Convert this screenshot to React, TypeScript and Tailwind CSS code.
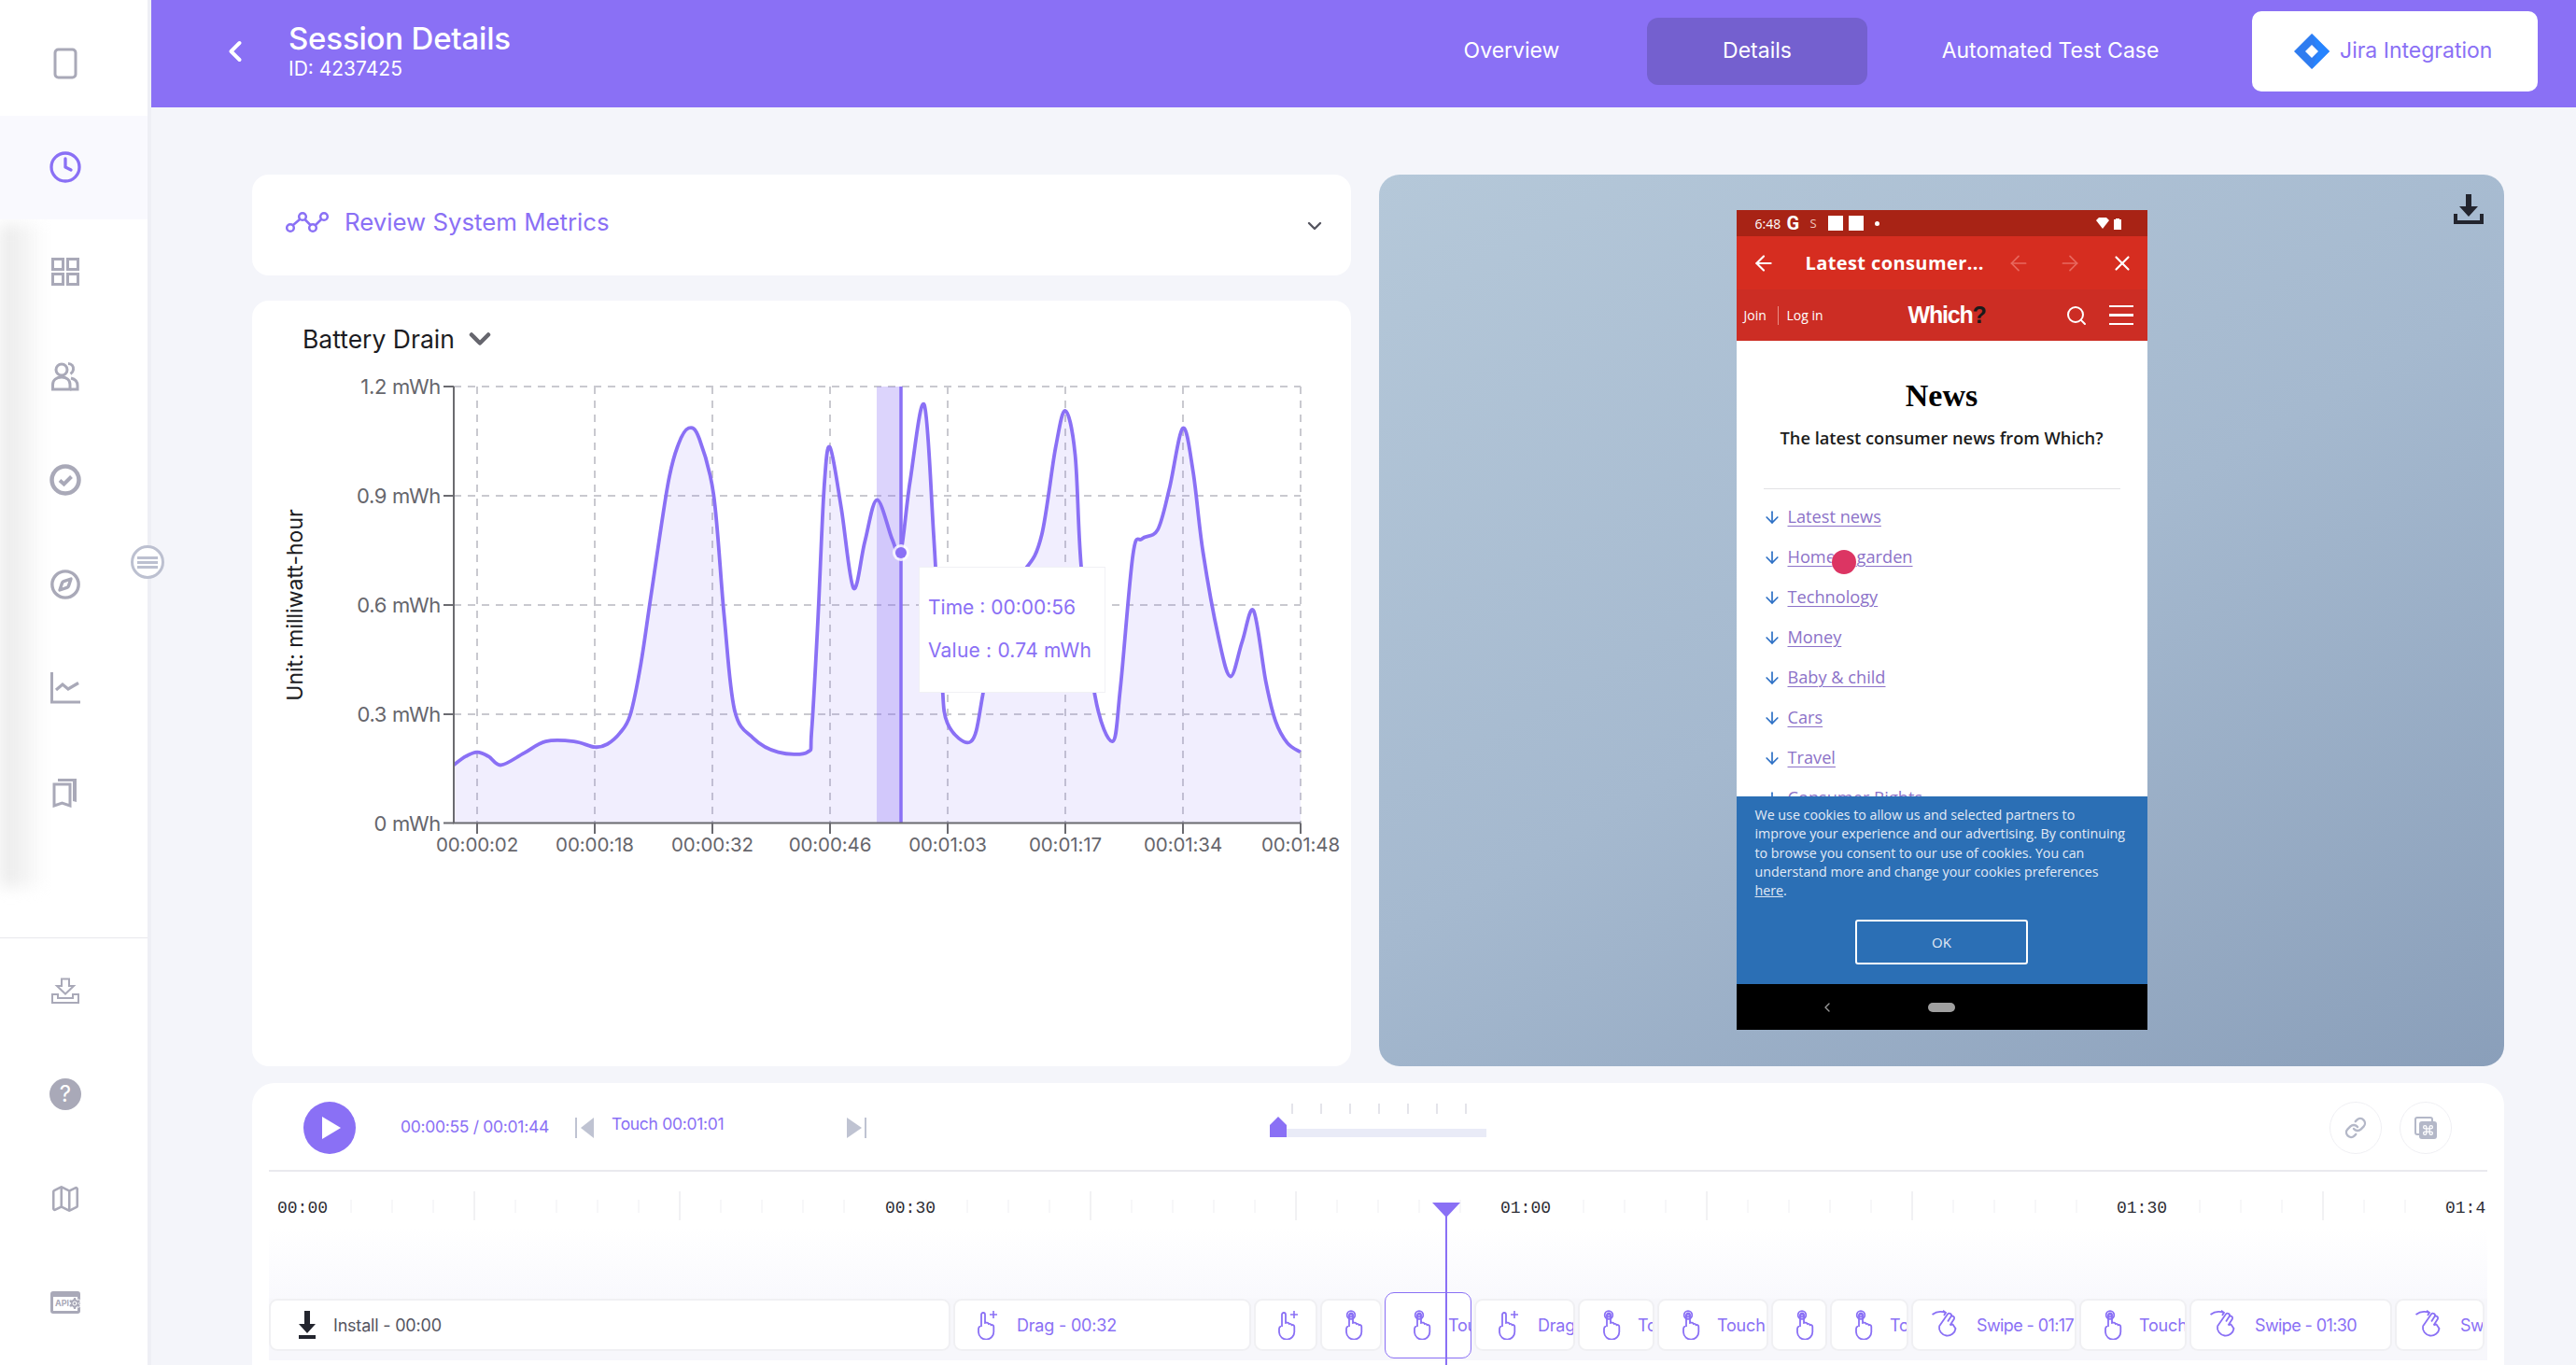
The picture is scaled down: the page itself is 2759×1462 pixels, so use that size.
import React from "react";
import { ArrowDown, ArrowLeft, ArrowRight, ChevronDown, ChevronLeft, Clock, Command, Compass, Link as LinkIcon, Map as MapIcon, Search, Settings, X } from "lucide-react";

const P = "#8a70f5";

const z4: [number, number][] = [
  [462, 1230], [490, 1205], [518, 1192], [545, 1205], [575, 1231], [630, 1195], [682, 1160], [750, 1160], [800, 1177], [830, 1168], [860, 1135], [885, 1080], [910, 930], [935, 720], [975, 390], [1000, 270], [1025, 220], [1050, 250], [1085, 420], [1110, 780], [1135, 1065], [1180, 1150], [1240, 1192], [1310, 1192], [1320, 1130], [1335, 800], [1350, 400], [1364, 277],
];
const z5: [number, number][] = [
  [240, 460], [271, 700], [300, 560], [331, 435], [370, 555], [391, 593], [415, 380], [451, 150], [475, 540], [495, 950], [510, 1105], [570, 1160], [600, 1020], [640, 700], [710, 640], [750, 540], [785, 280], [810, 168], [835, 300], [850, 630], [885, 1020], [930, 1160], [950, 1000], [982, 600], [1005, 552], [1045, 525], [1075, 400], [1109, 220], [1135, 350], [1160, 590], [1200, 850], [1230, 965], [1260, 860], [1289, 768], [1320, 980], [1345, 1100], [1375, 1165], [1408, 1192],
];
const curve: [number, number][] = [
  ...z4.map(([a, b]): [number, number] => [280 + a * 0.4464, 380 + b * 0.357]),
  ...z5.map(([a, b]): [number, number] => [800 + a * 0.421, 380 + b * 0.357]),
];

function smooth(pts: [number, number][]) {
  let d = `M${pts[0][0]} ${pts[0][1]}`;
  for (let i = 0; i < pts.length - 1; i++) {
    const p0 = pts[Math.max(0, i - 1)];
    const p1 = pts[i];
    const p2 = pts[i + 1];
    const p3 = pts[Math.min(pts.length - 1, i + 2)];
    d += ` C${p1[0] + (p2[0] - p0[0]) / 6} ${p1[1] + (p2[1] - p0[1]) / 6} ${p2[0] - (p3[0] - p1[0]) / 6} ${p2[1] - (p3[1] - p1[1]) / 6} ${p2[0]} ${p2[1]}`;
  }
  return d;
}

const line = smooth(curve);
const xTicks: [number, string][] = [[511, "00:00:02"], [637, "00:00:18"], [763, "00:00:32"], [889, "00:00:46"], [1015, "00:01:03"], [1141, "00:01:17"], [1267, "00:01:34"], [1393, "00:01:48"]];
const yTicks: [number, string][] = [[414, "1.2 mWh"], [531, "0.9 mWh"], [648, "0.6 mWh"], [765, "0.3 mWh"], [881.5, "0 mWh"]];

function Chart() {
  return (
    <svg viewBox="270 395 1177 560" className="block w-[1177px] h-[560px]">
      <g stroke="#c9c9cf" strokeWidth="2" strokeDasharray="8 7">
        {yTicks.slice(0, 4).map(([y]) => <line key={y} x1="486" x2="1393" y1={y} y2={y} />)}
        {xTicks.map(([x]) => <line key={x} x1={x} x2={x} y1="414" y2="881.5" />)}
      </g>
      <path d={`${line} L1393 881.5 L486 881.5 Z`} fill={P} fillOpacity="0.12" />
      <rect x="939" y="414" width="26" height="467.5" fill={P} fillOpacity="0.3" />
      <path d={line} fill="none" stroke={P} strokeWidth="3.8" />
      <line x1="965" x2="965" y1="414" y2="881.5" stroke={P} strokeWidth="3.5" />
      <circle cx="965" cy="592" r="9" fill="#fff" fillOpacity="0.8" />
      <circle cx="965" cy="592" r="6" fill={P} />
      <g stroke="#6b6b70" strokeWidth="2" fill="none">
        <path d="M486 414V881.5H1393" />
        {yTicks.map(([y]) => <line key={y} x1="475" x2="486" y1={y} y2={y} />)}
        {xTicks.map(([x]) => <line key={x} x1={x} x2={x} y1="881.5" y2="893" />)}
      </g>
      <g fill="#66666c" fontFamily="Inter, sans-serif">
        {yTicks.map(([y, t]) => <text key={y} x="472" y={y + 8} fontSize="22" textAnchor="end" letterSpacing="-0.3">{t}</text>)}
        {xTicks.map(([x, t]) => <text key={x} x={x} y="912" fontSize="20.5" textAnchor="middle" letterSpacing="-0.1">{t}</text>)}
      </g>
      <text transform="translate(324 648) rotate(-90)" textAnchor="middle" fontFamily="Inter, sans-serif" fontSize="23" fill="#1c1c22">Unit: milliwatt-hour</text>
    </svg>
  );
}

const si = "#a9a9b8";
function SideIcon({ name }: { name: string }) {
  const c = "block";
  switch (name) {
    case "phone":
      return <svg width="26" height="34" viewBox="0 0 26 34" className={c}><rect x="2" y="2" width="22" height="30" rx="3.5" fill="none" stroke={si} strokeWidth="3" /></svg>;
    case "clock":
      return <Clock size={36} color={P} strokeWidth={2.2} />;
    case "grid":
      return <svg width="30" height="30" viewBox="0 0 30 30" className={c}><g fill="none" stroke={si} strokeWidth="3"><rect x="1.5" y="1.5" width="11" height="11" /><rect x="17.5" y="1.5" width="11" height="11" /><rect x="1.5" y="17.5" width="11" height="11" /><rect x="17.5" y="17.5" width="11" height="11" /></g></svg>;
    case "users":
      return <svg width="30" height="32" viewBox="0 0 30 32" className={c}><g fill="none" stroke={si} strokeWidth="3"><circle cx="11" cy="9" r="6" /><path d="M1.5 30v-5c0-5 4-8 9.500-8s9 3 9 8v5z" /><path d="M18 2.500c4 0 6 3 5.500 6.500-.3 2-1.500 3.500-3 4.500" /><path d="M21 18c4 1 7 3.500 7 8v4h-8" /></g></svg>;
    case "check":
      return <svg width="34" height="34" viewBox="0 0 34 34" className={c}><circle cx="17" cy="17" r="14.500" fill="none" stroke={si} strokeWidth="4.500" /><path d="M11 17.500l4.500 4 8-8" fill="none" stroke={si} strokeWidth="4" /></svg>;
    case "compass":
      return <Compass size={34} color={si} strokeWidth={2.4} />;
    case "chart":
      return <svg width="32" height="34" viewBox="0 0 32 34" className={c}><path d="M1.500 0V32H32" fill="none" stroke={si} strokeWidth="3" /><path d="M6 19l7-6 6 5 11-6.500" fill="none" stroke={si} strokeWidth="3.200" /></svg>;
    case "book":
      return <svg width="28" height="33" viewBox="0 0 28 33" className={c}><path d="M2 8h17v23l-8.500-3L2 31z" fill="none" stroke={si} strokeWidth="3" /><path d="M6 6V2h20v25l-4-1V5H6z" fill={si} /></svg>;
    case "tray":
      return <svg width="30" height="28" viewBox="0 0 30 28" className={c}><path d="M11 1.500h8V9h5l-9 8.500L6 9h5z" fill="none" stroke={si} strokeWidth="2" /><path d="M1 18v9h28v-9h-6v4H7v-4z" fill="none" stroke={si} strokeWidth="2" /></svg>;
    case "help":
      return <div className="w-[34px] h-[34px] rounded-full bg-[#a9a9b8] text-white text-[24px] leading-[34px] text-center font-['Inter',sans-serif]">?</div>;
    case "map":
      return <MapIcon size={34} color={si} strokeWidth={1.8} />;
    default:
      return (
        <div className="relative w-[32px] h-[24px] rounded-[3px] border-[3px] border-t-[6px] border-[#a9a9b8]">
          <span className="block text-[9px] leading-[14px] font-bold text-[#a9a9b8] font-['Inter',sans-serif] pl-[2px]">API</span>
          <Settings size={16} color="#fff" fill={si} strokeWidth={1.5} className="absolute -right-[5px] top-[-1px]" />
        </div>
      );
  }
}

function HandTouch() {
  return (
    <svg width="28" height="32" viewBox="0 0 28 32" className="block shrink-0" fill="none" stroke={P} strokeWidth="1.800">
      <circle cx="11" cy="5.500" r="4.300" />
      <circle cx="11" cy="5.500" r="2" />
      <path d="M9 18V6.500a2 2 0 0 1 4 0V14l1.500-.3a2 2 0 0 1 2.300 1.300 2 2 0 0 1 2.700 1.200 2 2 0 0 1 2.800 1.800V23a8 8 0 0 1-16.300 1v-4a2.500 2.500 0 0 1 2-2.300" />
    </svg>
  );
}
function HandDrag() {
  return (
    <svg width="28" height="32" viewBox="0 0 28 32" className="block shrink-0" fill="none" stroke={P} strokeWidth="1.800">
      <path d="M8 18V5a2 2 0 0 1 4 0v9l1.500-.3a2 2 0 0 1 2.300 1.300 2 2 0 0 1 2.700 1.200 2 2 0 0 1 2.800 1.800V23a8 8 0 0 1-16.300 1v-4a2.500 2.500 0 0 1 2-2.300" />
      <path d="M21 1v8M17 5h8" strokeWidth="1.600" />
    </svg>
  );
}
function HandSwipe() {
  return (
    <svg width="30" height="32" viewBox="0 0 30 32" className="block shrink-0" fill="none" stroke={P} strokeWidth="1.800">
      <path d="M0.500 5C5 1.500 10 1 15 3M12 0.800L15 3l-2 3" />
      <path d="M8 17.500L17 4.500a2.200 2.200 0 0 1 3.600 2.500l-3.500 5.500M20.600 7a2.200 2.200 0 0 1 3.400 2.500l-4.500 7M19.500 16.500l3-1 3 4.500a8.800 8.800 0 1 1-17.500-2.500" />
    </svg>
  );
}

type Chip = { w: string; kind: "install" | "touch" | "drag" | "swipe"; text: string; sel?: boolean };
const chips: Chip[] = [
  { w: "w-[730px]", kind: "install", text: "Install - 00:00" },
  { w: "w-[319px]", kind: "drag", text: "Drag - 00:32" },
  { w: "w-[68px]", kind: "drag", text: "Drag" },
  { w: "w-[66px]", kind: "touch", text: "Touch" },
  { w: "w-[93px]", kind: "touch", text: "Touch", sel: true },
  { w: "w-[108px]", kind: "drag", text: "Drag" },
  { w: "w-[82px]", kind: "touch", text: "Touch" },
  { w: "w-[119px]", kind: "touch", text: "Touch" },
  { w: "w-[60px]", kind: "touch", text: "" },
  { w: "w-[84px]", kind: "touch", text: "Touch" },
  { w: "w-[177px]", kind: "swipe", text: "Swipe - 01:17" },
  { w: "w-[115px]", kind: "touch", text: "Touch" },
  { w: "w-[217px]", kind: "swipe", text: "Swipe - 01:30" },
  { w: "w-[96px]", kind: "swipe", text: "Swipe" },
];

function Phone() {
  const links = ["Latest news", "Home & garden", "Technology", "Money", "Baby & child", "Cars", "Travel", "Consumer Rights"];
  return (
    <div className="relative w-[440px] h-[878px] flex flex-col bg-white font-['Open_Sans',sans-serif]">
      <div className="h-[28px] bg-[#a82315] flex items-center pl-[20px] text-white">
        <span className="text-[14px] w-[34px]">6:48</span>
        <span className="text-[20px] leading-none font-bold w-[25px] font-['Roboto',sans-serif]">G</span>
        <span className="w-[19px] h-[16px] text-[13px] leading-[16px] text-[#f0c8c0]">S</span>
        <span className="w-[16px] h-[16px] bg-white" />
        <span className="w-[16px] h-[16px] bg-white ml-[6px]" />
        <span className="w-[5px] h-[5px] rounded-full bg-white ml-[12px]" />
        <svg width="14" height="12" viewBox="0 0 14 12" className="ml-[232px]"><path d="M0 3l3-3h8l3 3-7 9z" fill="#fff" /></svg>
        <svg width="8" height="13" viewBox="0 0 8 13" className="ml-[5px]"><path d="M2 1h4v1h2v11H0V2h2z" fill="#fff" /></svg>
      </div>
      <div className="h-[57px] bg-[#d62d20] flex items-center text-white">
        <ArrowLeft size={26} strokeWidth={2} className="ml-[16px]" />
        <span className="ml-[32px] w-[215px] text-[20px] leading-none font-bold tracking-[0.4px] whitespace-nowrap">Latest consumer...</span>
        <ArrowLeft size={26} strokeWidth={1.6} className="text-[#e8695f]" />
        <ArrowRight size={26} strokeWidth={1.6} className="ml-[29px] text-[#e8695f]" />
        <X size={26} strokeWidth={2} className="ml-[30px]" />
      </div>
      <div className="h-[55px] bg-[#cc2d24] flex items-center text-white">
        <span className="ml-[8px] text-[14px] w-[30px]">Join</span>
        <span className="ml-[6px] w-px h-[20px] bg-[#ea8d85]" />
        <span className="ml-[9px] text-[14px] w-[50px] whitespace-nowrap">Log in</span>
        <span className="ml-[80px] text-[25px] leading-none font-bold tracking-[-1.2px] font-['Liberation_Sans',sans-serif] whitespace-nowrap w-[168px]">Which<span className="text-[#1a1a1a]">?</span></span>
        <Search size={24} strokeWidth={2} />
        <div className="ml-[23px] w-[26px] flex flex-col gap-[7px]">
          <span className="block h-[2.500px] bg-white" />
          <span className="block h-[2.500px] bg-white" />
          <span className="block h-[2.500px] bg-white" />
        </div>
      </div>
      <div className="flex-1 overflow-hidden">
        <h1 className="mt-[42px] text-center text-[34px] leading-[34px] font-bold text-black font-['Liberation_Serif',serif]">News</h1>
        <p className="mt-[14px] text-center text-[18.300px] leading-[27px] font-semibold text-[#1c1c1c]">The latest consumer news from Which?</p>
        <div className="mt-[41px] mx-[29px] h-[1px] bg-[#e2e2e4]" />
        <ul className="mt-[8px] ml-[28px]">
          {links.map((t) => (
            <li key={t} className="h-[43px] flex items-center text-[18.200px] text-[#8c72c8]">
              <ArrowDown size={20} strokeWidth={2} className="text-[#2b6fc5]" />
              <span className="ml-[7px] underline underline-offset-[3px] decoration-1">{t}</span>
            </li>
          ))}
        </ul>
      </div>
      <div className="h-[201px] bg-[#2b6fb5] pt-[10px] px-[20px] text-[14.250px] leading-[20.300px] text-[#e2eaf5] whitespace-nowrap">
        We use cookies to allow us and selected partners to<br />
        improve your experience and our advertising. By continuing<br />
        to browse you consent to our use of cookies. You can<br />
        understand more and change your cookies preferences<br />
        <span className="underline">here</span>.
        <div className="mt-[21px] mx-auto w-[185px] h-[48px] rounded-[3px] border-2 border-white flex items-center justify-center text-[15px]">OK</div>
      </div>
      <div className="h-[49px] bg-black flex items-center">
        <ChevronLeft size={16} className="ml-[89px] text-[#9a9a9a]" />
        <span className="ml-[100px] w-[29px] h-[10px] rounded-full bg-[#a0a0a0]" />
      </div>
      <span className="absolute left-[102px] top-[364px] w-[26px] h-[26px] rounded-full bg-[#dc3563] shadow-[0_0_3px_#ffffff]" />
    </div>
  );
}

function Ruler() {
  const ticks: React.ReactNode[] = [];
  for (let i = 0; i <= 54; i++) {
    const x = 288 + 44 * i;
    if (i % 15 === 0) continue;
    const major = i % 5 === 0;
    ticks.push(<line key={i} x1={x} x2={x} y1={major ? 1276 : 1285} y2={major ? 1307 : 1299} stroke={major ? "#e4e4e8" : "#efeff2"} strokeWidth="1" />);
  }
  const labels: [number, string][] = [[297, "00:00"], [948, "00:30"], [1607, "01:00"], [2267, "01:30"], [2619, "01:4"]];
  return (
    <svg viewBox="288 1255 2375 60" className="block w-[2375px] h-[60px]">
      {ticks}
      <g fontFamily="'Liberation Mono', monospace" fontSize="18" fill="#2c2c33">
        {labels.map(([x, t]) => <text key={t} x={x} y="1299">{t}</text>)}
      </g>
    </svg>
  );
}

export default function App() {
  return (
    <div className="relative w-[2759px] h-[1462px] overflow-hidden flex bg-[#f4f5fa] font-['Inter',sans-serif]">
      <aside className="relative w-[162px] shrink-0 bg-white border-r-[4px] border-[#eeeff5] flex flex-col pt-[12px] overflow-visible">
        <div className="absolute left-0 top-[240px] w-[50px] h-[710px] bg-gradient-to-r from-[#e8e8e8] to-transparent blur-[8px]" />
        {["phone", "clock", "grid", "users", "check", "compass", "chart", "book"].map((n) => (
          <div key={n} className={`relative h-[111.600px] flex items-center justify-center pr-[18px] ${n === "clock" ? "bg-[#f9f9fe]" : ""}`}>
            <SideIcon name={n} />
          </div>
        ))}
        <div className="relative mt-[99px] border-t border-[#e8e8ec]">
          {["tray", "help", "map", "api"].map((n) => (
            <div key={n} className="h-[111.600px] flex items-center justify-center pr-[18px]">
              <SideIcon name={n} />
            </div>
          ))}
        </div>
        <div className="absolute left-[140px] top-[584px] w-[36px] h-[36px] rounded-full bg-white border-[3px] border-[#bcc0d0] flex flex-col items-center justify-center gap-[2px]">
          <span className="block w-[22px] h-[3px] bg-[#bcc0d0]" />
          <span className="block w-[22px] h-[3px] bg-[#bcc0d0]" />
          <span className="block w-[22px] h-[3px] bg-[#bcc0d0]" />
        </div>
      </aside>

      <main className="flex-1 min-w-0 flex flex-col">
        <header className="h-[115px] shrink-0 bg-[#8a70f5] flex items-center text-white">
          <ChevronLeft size={36} strokeWidth={2.6} className="ml-[72px] mb-[6px]" />
          <div className="ml-[39px] w-[300px] mb-[8px]">
            <div className="text-[33px] leading-[38px] font-medium tracking-[-0.2px]">Session Details</div>
            <div className="text-[21px] leading-[24px] mt-[2px]">ID: 4237425</div>
          </div>
          <div className="ml-auto mb-[6px] flex items-center text-[23px]">
            <div className="w-[236px] text-center">Overview</div>
            <div className="ml-[27px] w-[236px] h-[72px] rounded-[12px] bg-[#7460cf] flex items-center justify-center">Details</div>
            <div className="ml-[78px] w-[236px] text-center whitespace-nowrap">Automated Test Case</div>
            <div className="ml-[98px] mr-[41px] w-[306px] h-[86px] rounded-[10px] bg-white flex items-center text-[#8a70f5]">
              <svg width="38" height="38" viewBox="0 0 38 38" className="ml-[45px] shrink-0">
                <path d="M19 0L0 19l19 19 19-19z" fill="#2f7cf0" />
                <path d="M19 0l19 19-19 19 7-19z" fill="#2684ff" />
                <path d="M19 12l7 7-7 7-7-7z" fill="#fff" />
              </svg>
              <span className="ml-[11px] whitespace-nowrap">Jira Integration</span>
            </div>
          </div>
        </header>

        <div className="flex-1 min-h-0 pl-[108px] pr-[77px] pt-[72px] flex flex-col gap-[18px]">
          <div className="flex gap-[30px] h-[955px] shrink-0">
            <div className="w-[1177px] shrink-0 flex flex-col gap-[27px]">
              <div className="h-[108px] rounded-[18px] bg-white flex items-center pl-[36px] pb-[6px]">
                <svg width="46" height="24" viewBox="0 0 46 24" fill="none" stroke={P} strokeWidth="2.500">
                  <circle cx="5" cy="18" r="3.800" />
                  <circle cx="18" cy="6" r="3.800" />
                  <circle cx="29" cy="18" r="3.800" />
                  <circle cx="41" cy="6" r="3.800" />
                  <path d="M8 15l7-6M20.500 9l6 6M32 15l6-6" />
                </svg>
                <span className="ml-[17px] text-[25.800px] leading-none text-[#8a70f5]">Review System Metrics</span>
                <ChevronDown size={24} strokeWidth={2.4} className="ml-auto mr-[27px] mt-[8px] text-[#55555f]" />
              </div>
              <div className="relative h-[820px] rounded-[18px] bg-white">
                <div className="h-[73px] flex items-center pl-[54px] pt-[9px]">
                  <span className="text-[26.500px] leading-none text-[#1c1c22]">Battery Drain</span>
                  <ChevronDown size={36} strokeWidth={3} className="ml-[9px] text-[#66666e]" />
                </div>
                <Chart />
                <div className="absolute left-[714px] top-[285px] w-[200px] h-[135px] bg-white border border-[#f1f1f5] pl-[9px] text-[#8a70f5] text-[21px]">
                  <div className="mt-[29px] leading-[28px]">Time : 00:00:56</div>
                  <div className="mt-[18px] leading-[28px] whitespace-nowrap tracking-[0.2px]">Value : 0.74 mWh</div>
                </div>
              </div>
            </div>
            <div className="relative flex-1 rounded-[22px] bg-[linear-gradient(150deg,#b5c8d9_0%,#a5b9cf_50%,#8a9fba_100%)] flex justify-center pt-[38px]">
              <Phone />
              <svg width="32" height="32" viewBox="0 0 32 32" className="absolute top-[21px] right-[22px]">
                <path d="M13 0h6v13h7l-10 11L6 13h7z" fill="#23252e" />
                <path d="M0 21h4v7h24v-7h4v11H0z" fill="#23252e" />
              </svg>
            </div>
          </div>

          <div className="flex-1 min-h-0 rounded-t-[24px] bg-white px-[18px] overflow-hidden">
            <div className="relative h-[302px]">
              <div className="h-[95px] pt-[2px] flex items-center border-b-2 border-[#e9e9ee]">
                <div className="ml-[37px] w-[56px] h-[56px] rounded-full bg-[#8a70f5] flex items-center justify-center">
                  <svg width="20" height="24" viewBox="0 0 20 24" className="ml-[3px]"><path d="M0 0l20 12L0 24z" fill="#fff" /></svg>
                </div>
                <span className="ml-[48px] w-[187px] text-[17.500px] tracking-[-0.3px] text-[#8a70f5] whitespace-nowrap">00:00:55 / 00:01:44</span>
                <svg width="20" height="24" viewBox="0 0 20 24"><path d="M1 1v22" stroke="#bfc3d2" strokeWidth="2" /><path d="M20 1v22L6 12z" fill="#bfc3d2" /></svg>
                <span className="ml-[19px] w-[252px] mb-[6px] text-[17.500px] tracking-[-0.3px] text-[#8a70f5] whitespace-nowrap">Touch 00:01:01</span>
                <svg width="22" height="24" viewBox="0 0 22 24"><path d="M0 1v22l16-11z" fill="#bfc3d2" /><path d="M20 1v22" stroke="#bfc3d2" strokeWidth="2" /></svg>
                <div className="ml-[431px] w-[232px] self-start mt-[20px]">
                  <div className="flex gap-[29px] ml-[23px]">
                    {[0, 1, 2, 3, 4, 5, 6].map((i) => <span key={i} className="block w-[2px] h-[11px] bg-[#e4e4ea]" />)}
                  </div>
                  <div className="mt-[3px] flex items-end">
                    <svg width="18" height="22" viewBox="0 0 18 22" className="block shrink-0"><path d="M9 0l9 9v13H0V9z" fill={P} /></svg>
                    <div className="flex-1 h-[9px] bg-[#e9ebf7]" />
                  </div>
                </div>
                <div className="ml-[903px] w-[56px] h-[56px] rounded-full border border-[#efeff3] flex items-center justify-center">
                  <LinkIcon size={24} strokeWidth={2.4} className="text-[#b4b8c8]" />
                </div>
                <div className="ml-[19px] w-[56px] h-[56px] rounded-full border border-[#efeff3] flex items-center justify-center">
                  <div className="relative w-[24px] h-[24px]">
                    <span className="absolute left-0 top-0 w-[20px] h-[20px] rounded-[3px] border-[2px] border-[#b4b8c8]" />
                    <span className="absolute left-[5px] top-[5px] w-[19px] h-[19px] rounded-[3px] bg-[#b4b8c8] flex items-center justify-center">
                      <Command size={13} strokeWidth={2.4} color="#fff" />
                    </span>
                  </div>
                </div>
              </div>
              <Ruler />
              <div className="h-[76px] bg-gradient-to-b from-white to-[#f9f9fd]" />
              <div className="bg-[#f7f7fb] pb-[10px]">
                <div className="h-[56px] flex items-center gap-[3px]">
                  {chips.map((c, i) =>
                    <div key={i} className={`${c.w} shrink-0 flex items-center overflow-hidden whitespace-nowrap text-[18px] bg-white ${c.sel ? "h-[71px] rounded-[10px] border-[1.500px] border-[#8a70f5] z-10 pl-[25px]" : "h-[56px] rounded-[9px] border-2 border-[#f0f0f3]"} ${c.kind === "install" ? "pl-[25px] text-[#55555f]" : c.sel ? "text-[#8a70f5]" : "pl-[20px] text-[#8a70f5]"} ${c.kind === "swipe" ? "tracking-[-0.6px]" : "tracking-[-0.2px]"}`}>
                      {c.kind === "install" && (
                        <svg width="28" height="30" viewBox="0 0 28 30" className="block shrink-0 mr-[14px]"><path d="M11 0h6v14h6L14 24 5 14h6z" fill="#23252e" /><rect x="5" y="26" width="18" height="4" fill="#23252e" /></svg>
                      )}
                      {c.kind === "touch" && <HandTouch />}
                      {c.kind === "drag" && <HandDrag />}
                      {c.kind === "swipe" && <HandSwipe />}
                      <span className={c.kind === "install" ? "" : c.kind === "touch" ? "ml-[14px]" : c.kind === "drag" ? "ml-[18px]" : "ml-[18px]"}>{c.text}</span>
                    </div>
                  )}
                </div>
              </div>
              <svg width="32" height="174" viewBox="0 0 32 174" className="absolute left-[1245px] top-[128px] z-20">
                <path d="M1 0h30L16 16z" fill={P} />
                <line x1="16" x2="16" y1="10" y2="174" stroke={P} strokeWidth="2" />
              </svg>
            </div>
          </div>
        </div>
      </main>
    </div>
  );
}
